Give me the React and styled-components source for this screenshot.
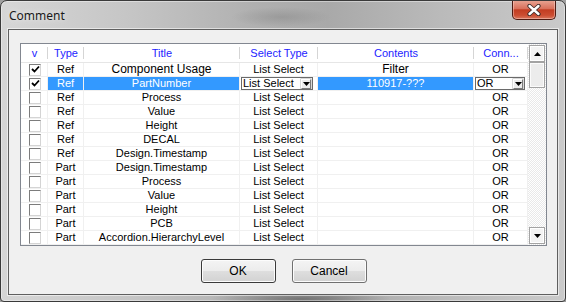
import React from 'react';
import styled, { createGlobalStyle, css } from 'styled-components';

const Global = createGlobalStyle`
  html, body { margin: 0; padding: 0; background: #a0a0a0; }
  body { width: 566px; height: 302px; overflow: hidden; font-family: "Liberation Sans", Arial, sans-serif; }
  * { box-sizing: border-box; }
`;

const Window = styled.div`
  width: 566px;
  height: 302px;
  border: 1px solid #3a3a3a;
  border-radius: 7px 7px 4px 4px;
  background:
    radial-gradient(ellipse 50px 10px at 280px 16px, rgba(110,110,110,0.3), rgba(110,110,110,0) 100%),
    radial-gradient(ellipse 90px 10px at 300px 298px, rgba(60,60,60,0.5), rgba(60,60,60,0) 100%),
    linear-gradient(90deg, #d6d6d6 0%, #c6c6c6 22%, #b0b0b0 45%, #a9a9a9 58%, #bababa 78%, #cacaca 100%);
  display: flex;
  flex-direction: column;
  padding: 0 7px 6px 7px;
  box-shadow: inset 0 0 0 1px rgba(255,255,255,0.4);
  overflow: hidden;
`;

const TitleBar = styled.div`
  height: 28px;
  display: flex;
  align-items: flex-start;
`;

const TitleText = styled.div`
  font-family: "Noto Sans", "Open Sans", sans-serif;
  font-size: 12px;
  color: #1a1a1a;
  padding-top: 7px;
  padding-left: 1px;
  line-height: 16px;
  text-shadow: 0 0 6px rgba(255,255,255,0.8);
`;

const CloseButton = styled.div`
  margin-left: auto;
  margin-top: -1px;
  margin-right: 2px;
  width: 44px;
  height: 20px;
  border: 1px solid #4e1b12;
  border-top: none;
  border-radius: 0 0 5px 5px;
  background: linear-gradient(#e9a796 0%, #d9715c 45%, #c23d22 52%, #cc4d31 80%, #d8775e 100%);
  box-shadow: inset 0 0 0 1px rgba(255,220,210,0.45);
  display: flex;
  align-items: center;
  justify-content: center;
`;

const Client = styled.div`
  flex: 1;
  background: #f0f0f0;
  border: 1px solid #5f5f5f;
  box-shadow: 0 0 0 1px rgba(255,255,255,0.55);
  display: flex;
  flex-direction: column;
  padding: 13px 10px 0 11px;
`;

const Grid = styled.div`
  height: 203px;
  border: 1px solid #828790;
  background: #fff;
  display: flex;
`;

const Table = styled.div`
  width: 507px;
  display: flex;
  flex-direction: column;
`;

const columns = css`
  display: grid;
  grid-template-columns: 27px 36px 156px 78px 156px 54px;
`;

const HeaderRow = styled.div`
  ${columns};
  height: 19px;
  border-bottom: 1px solid #e6e6e6;
`;

const HeaderCell = styled.div`
  position: relative;
  font-size: 11px;
  color: #2323ff;
  text-align: center;
  line-height: 18px;
  white-space: nowrap;
  overflow: hidden;
  &::after {
    content: "";
    position: absolute;
    right: 0;
    top: 3px;
    bottom: 3px;
    width: 1px;
    background: #d5d5d5;
  }
`;

const Row = styled.div`
  ${columns};
  height: 14px;
`;

const Cell = styled.div`
  border-right: 1px solid #f0f0f0;
  border-bottom: 1px solid #f0f0f0;
  font-size: ${p => (p.$big ? '12px' : '11px')};
  line-height: 13px;
  text-align: center;
  white-space: nowrap;
  overflow: hidden;
  color: ${p => (p.$selected ? '#fff' : '#000')};
  background: ${p => (p.$selected ? '#3399ff' : '#fff')};
  display: flex;
  align-items: center;
  justify-content: center;
`;

const ComboCell = styled.div`
  border-right: 1px solid #f0f0f0;
  border-bottom: 1px solid #f0f0f0;
  background: #fff;
  display: flex;
  padding-left: 1px;
  padding-right: ${p => p.$pr}px;
`;

const Combo = styled.div`
  flex: 1;
  height: 13px;
  border: 1px solid #6a6a6a;
  background: #fff;
  display: flex;
  align-items: center;
  font-size: 11px;
  color: #000;
  padding-left: 1px;
  white-space: nowrap;
  overflow: hidden;
`;

const ComboText = styled.span`
  flex: 1;
  line-height: 11px;
`;

const ComboArrow = styled.div`
  width: 10px;
  height: 10px;
  margin-right: 1px;
  border: 1px solid;
  border-color: #fff #7a7a7a #7a7a7a #fff;
  background: #ececec;
  box-shadow: 0 0 0 0.5px #b0b0b0;
  display: flex;
  align-items: center;
  justify-content: center;
`;

const Check = styled.div`
  width: 12px;
  height: 12px;
  margin-left: 2px;
  border: 1px solid;
  border-color: #7c7c7c #d4d4d4 #d4d4d4 #7c7c7c;
  background: #fff;
  display: flex;
  align-items: center;
  justify-content: center;
`;

const Scrollbar = styled.div`
  width: 18px;
  display: flex;
  flex-direction: column;
  padding: 1px;
  background: repeating-conic-gradient(#e9e9e9 0 25%, #ffffff 0 50%) 0 0 / 2px 2px;
`;

const ScrollButton = styled.div`
  height: 17px;
  border: 1px solid #a3a3a3;
  background: #f3f3f3;
  box-shadow: inset 0 0 0 1px #fff;
  display: flex;
  align-items: center;
  justify-content: center;
  flex: none;
`;

const Thumb = styled.div`
  height: 26px;
  border: 1px solid #a3a3a3;
  background: #ececec;
  box-shadow: inset 0 0 0 1px #fbfbfb;
  flex: none;
`;

const Track = styled.div`
  flex: 1;
`;

const ButtonRow = styled.div`
  display: flex;
  justify-content: center;
  gap: 16px;
  margin-top: 13px;
`;

const Button = styled.div`
  width: 75px;
  height: 24px;
  border: 1px solid ${p => (p.$default ? '#3a3a3a' : '#707070')};
  border-radius: 3px;
  background: linear-gradient(#f4f4f4 0%, #ececec 48%, #dedede 52%, #d2d2d2 100%);
  box-shadow: inset 0 0 0 1px #fcfcfc;
  font-size: 12px;
  color: #000;
  display: flex;
  align-items: center;
  justify-content: center;
`;

const CheckMark = () => (
  <svg width="9" height="9" viewBox="0 0 9 9">
    <path d="M1 4 L3.5 6.5 L8 1.5" fill="none" stroke="#000" strokeWidth="1.8" />
  </svg>
);

const Tri = ({ up }) => (
  <svg width="7" height="4" viewBox="0 0 7 4">
    <path d={up ? 'M0 4 L3.5 0 L7 4 Z' : 'M0 0 L7 0 L3.5 4 Z'} fill="#000" />
  </svg>
);

const rows = [
  { c: true, type: 'Ref', title: 'Component Usage', sel: 'List Select', contents: 'Filter', conn: 'OR', big: true },
  { c: true, type: 'Ref', title: 'PartNumber', sel: 'List Select', contents: '110917-???', conn: 'OR', selected: true },
  { c: false, type: 'Ref', title: 'Process', sel: 'List Select', contents: '', conn: 'OR' },
  { c: false, type: 'Ref', title: 'Value', sel: 'List Select', contents: '', conn: 'OR' },
  { c: false, type: 'Ref', title: 'Height', sel: 'List Select', contents: '', conn: 'OR' },
  { c: false, type: 'Ref', title: 'DECAL', sel: 'List Select', contents: '', conn: 'OR' },
  { c: false, type: 'Ref', title: 'Design.Timestamp', sel: 'List Select', contents: '', conn: 'OR' },
  { c: false, type: 'Part', title: 'Design.Timestamp', sel: 'List Select', contents: '', conn: 'OR' },
  { c: false, type: 'Part', title: 'Process', sel: 'List Select', contents: '', conn: 'OR' },
  { c: false, type: 'Part', title: 'Value', sel: 'List Select', contents: '', conn: 'OR' },
  { c: false, type: 'Part', title: 'Height', sel: 'List Select', contents: '', conn: 'OR' },
  { c: false, type: 'Part', title: 'PCB', sel: 'List Select', contents: '', conn: 'OR' },
  { c: false, type: 'Part', title: 'Accordion.HierarchyLevel', sel: 'List Select', contents: '', conn: 'OR' },
];

const ComboBox = ({ text, pr }) => (
  <ComboCell $pr={pr}>
    <Combo>
      <ComboText>{text}</ComboText>
      <ComboArrow><Tri /></ComboArrow>
    </Combo>
  </ComboCell>
);

export default function App() {
  return (
    <>
      <Global />
      <Window>
        <TitleBar>
          <TitleText>Comment</TitleText>
          <CloseButton>
            <svg width="14" height="12" viewBox="0 0 14 12">
              <path d="M2.5 2 L11.5 10 M11.5 2 L2.5 10" stroke="#3b2b28" strokeWidth="4.2" strokeLinecap="round" />
              <path d="M2.5 2 L11.5 10 M11.5 2 L2.5 10" stroke="#fff" strokeWidth="2.4" strokeLinecap="round" />
            </svg>
          </CloseButton>
        </TitleBar>
        <Client>
          <Grid>
            <Table>
              <HeaderRow>
                <HeaderCell>v</HeaderCell>
                <HeaderCell>Type</HeaderCell>
                <HeaderCell>Title</HeaderCell>
                <HeaderCell>Select Type</HeaderCell>
                <HeaderCell>Contents</HeaderCell>
                <HeaderCell>Conn...</HeaderCell>
              </HeaderRow>
              {rows.map((r, i) => (
                <Row key={i}>
                  <Cell>
                    <Check>{r.c && <CheckMark />}</Check>
                  </Cell>
                  <Cell $selected={r.selected}>{r.type}</Cell>
                  <Cell $selected={r.selected} $big={r.big}>{r.title}</Cell>
                  {r.selected ? <ComboBox text={r.sel} pr={4} /> : <Cell>{r.sel}</Cell>}
                  <Cell $selected={r.selected} $big={r.big}>{r.contents}</Cell>
                  {r.selected ? <ComboBox text={r.conn} pr={2} /> : <Cell>{r.conn}</Cell>}
                </Row>
              ))}
            </Table>
            <Scrollbar>
              <ScrollButton><Tri up /></ScrollButton>
              <Thumb />
              <Track />
              <ScrollButton><Tri /></ScrollButton>
            </Scrollbar>
          </Grid>
          <ButtonRow>
            <Button $default>OK</Button>
            <Button>Cancel</Button>
          </ButtonRow>
        </Client>
      </Window>
    </>
  );
}
